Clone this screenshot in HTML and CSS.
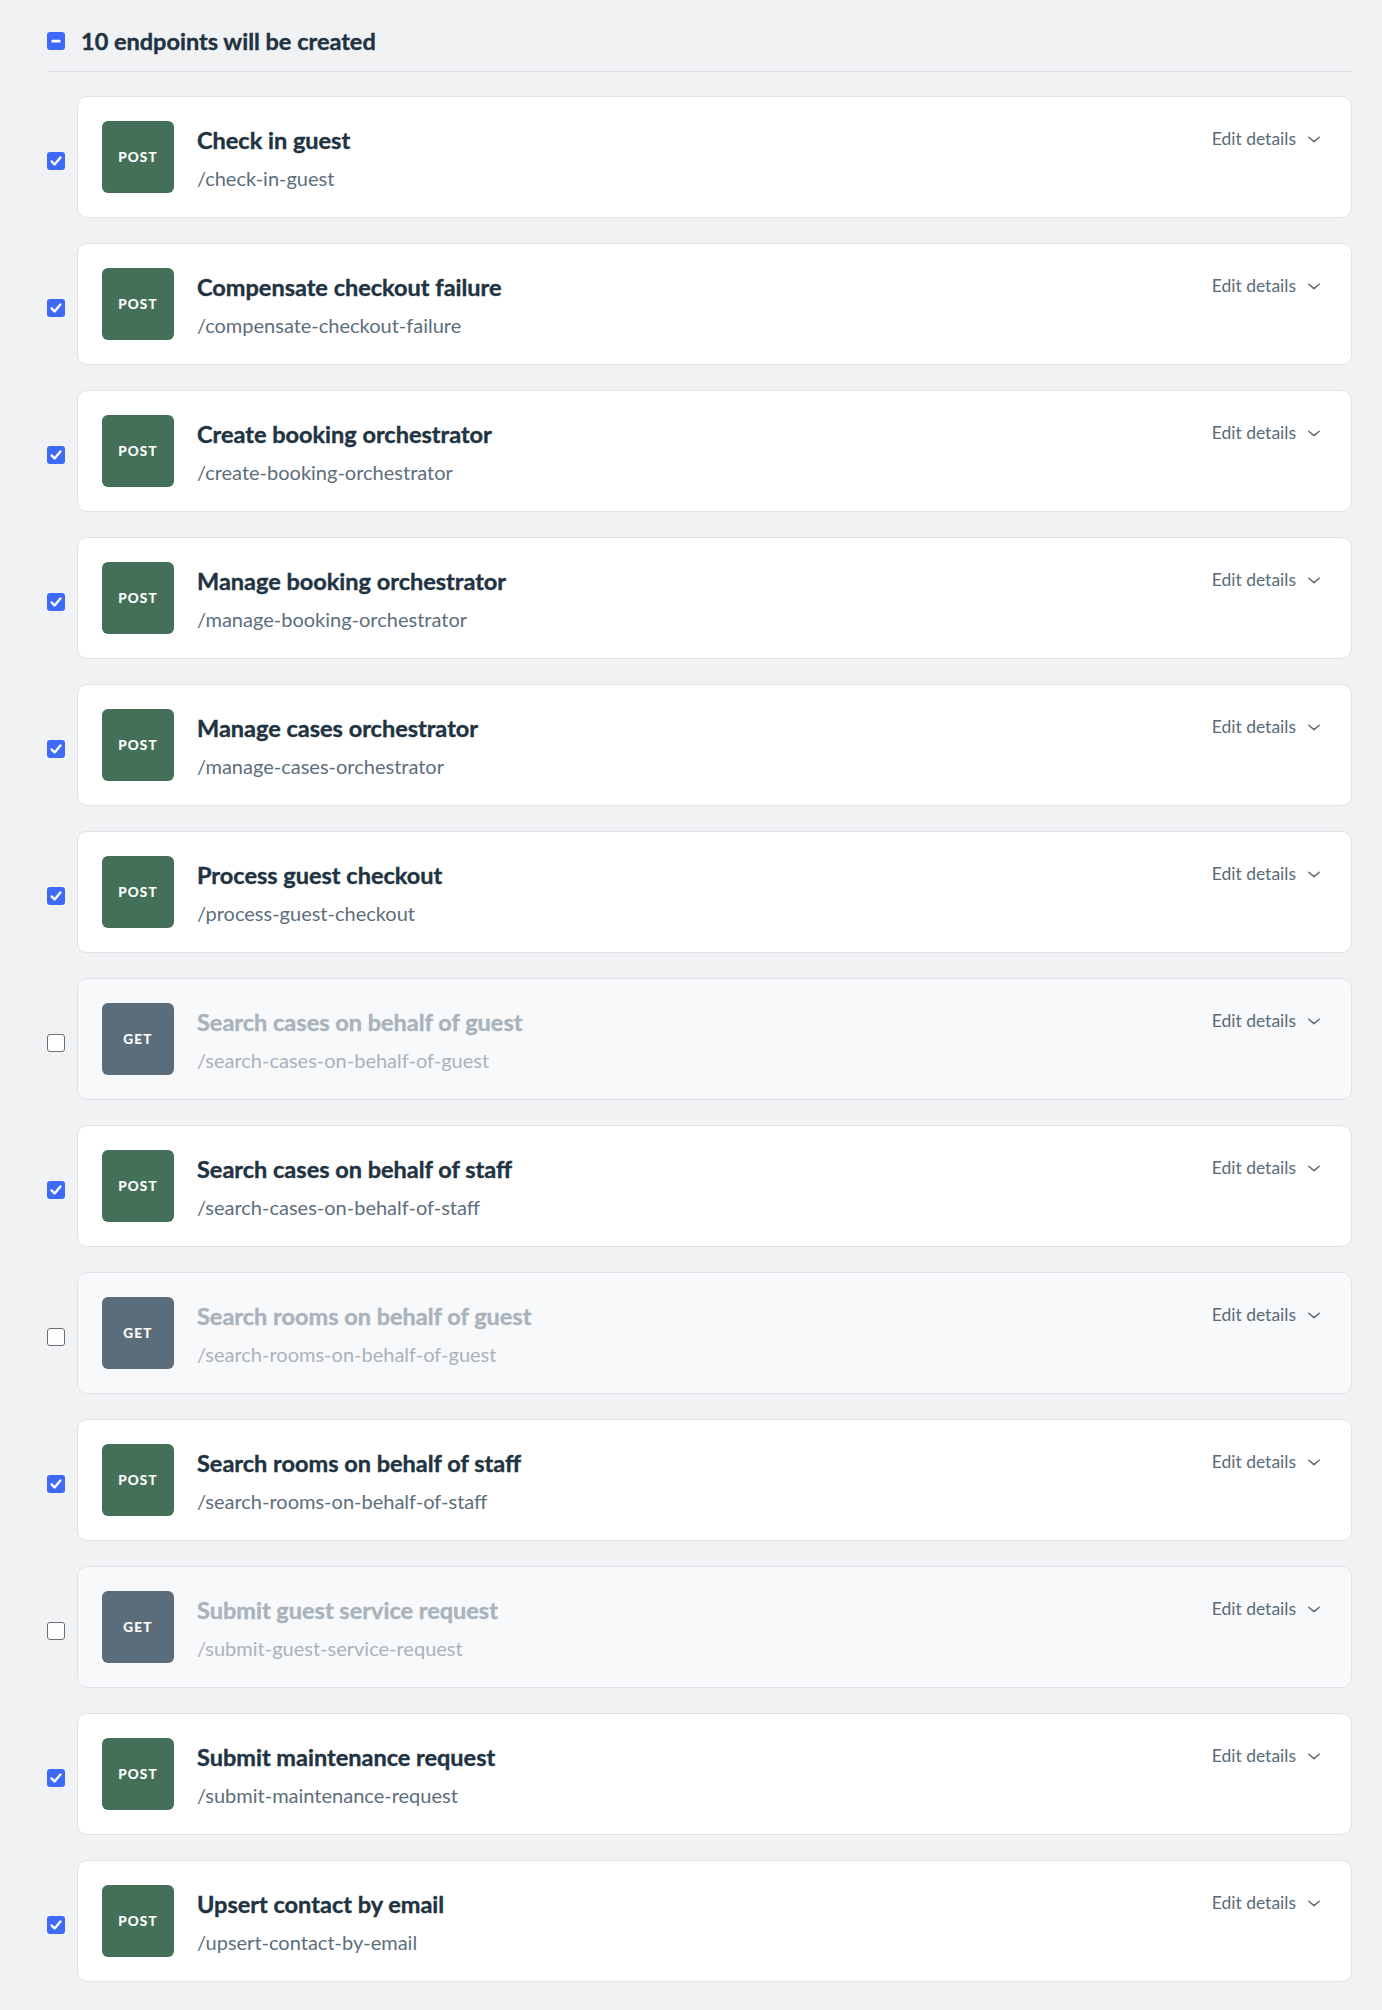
FILE: index.html
```html
<!DOCTYPE html>
<html lang="en">
<head>
    <meta charset="UTF-8">
    <title>Endpoints</title>
    <link rel="stylesheet" href="styles.css">
</head>
<body>
    <main class="endpoints">
        <div class="endpoints-head">
            <span class="box checked">
                <svg viewBox="0 0 18 18" width="18" height="18"><rect x="4.5" y="7.8" width="9" height="2.6" rx="1" fill="#fff"/></svg>
            </span>
            <h2>10 endpoints will be created</h2>
        </div>

        <ul class="endpoint-list" id="list"></ul>
    </main>

    <script>
        const endpoints = [
            ['POST', 'Check in guest', '/check-in-guest', true],
            ['POST', 'Compensate checkout failure', '/compensate-checkout-failure', true],
            ['POST', 'Create booking orchestrator', '/create-booking-orchestrator', true],
            ['POST', 'Manage booking orchestrator', '/manage-booking-orchestrator', true],
            ['POST', 'Manage cases orchestrator', '/manage-cases-orchestrator', true],
            ['POST', 'Process guest checkout', '/process-guest-checkout', true],
            ['GET', 'Search cases on behalf of guest', '/search-cases-on-behalf-of-guest', false],
            ['POST', 'Search cases on behalf of staff', '/search-cases-on-behalf-of-staff', true],
            ['GET', 'Search rooms on behalf of guest', '/search-rooms-on-behalf-of-guest', false],
            ['POST', 'Search rooms on behalf of staff', '/search-rooms-on-behalf-of-staff', true],
            ['GET', 'Submit guest service request', '/submit-guest-service-request', false],
            ['POST', 'Submit maintenance request', '/submit-maintenance-request', true],
            ['POST', 'Upsert contact by email', '/upsert-contact-by-email', true]
        ];

        const tick = '<svg viewBox="0 0 18 18" width="18" height="18"><path d="M4.6 9.4l3 3.1 5.8-7" fill="none" stroke="#fff" stroke-width="2.4" stroke-linecap="round" stroke-linejoin="round"/></svg>';
        const chevron = '<svg viewBox="0 0 16 16" width="16" height="16"><path d="M2 6l6 5 6-5" fill="none" stroke="currentColor" stroke-width="1.7" stroke-linecap="round" stroke-linejoin="round"/></svg>';

        document.getElementById('list').innerHTML = endpoints.map(([method, name, path, on]) => `
            <li class="endpoint-row">
                <span class="box ${on ? 'checked' : ''}">${on ? tick : ''}</span>
                <div class="endpoint-card ${on ? '' : 'off'}">
                    <span class="method ${method.toLowerCase()}">${method}</span>
                    <div class="endpoint-info">
                        <div class="endpoint-name">${name}</div>
                        <div class="endpoint-path">${path}</div>
                    </div>
                    <button class="edit-toggle">Edit details ${chevron}</button>
                </div>
            </li>`).join('');
    </script>
</body>
</html>
```

FILE: styles.css
```css
body {
    margin: 0;
    background: #f1f2f4;
    font-family: Lato, 'Open Sans', sans-serif;
    color: #1f3342;
}

.endpoints {
    padding: 28px 30px 20px 47px;
}

.endpoints-head {
    display: flex;
    align-items: center;
    gap: 16px;
    padding-bottom: 17px;
    border-bottom: 1px solid #dcdfe3;
}

.endpoints-head h2 {
    margin: 0;
    font-size: 23.5px;
    line-height: 26px;
    font-weight: 700;
    -webkit-text-stroke: 0.4px currentColor;
    color: #1f3342;
}

.box {
    flex: none;
    width: 18px;
    height: 18px;
    box-sizing: border-box;
    border: 1.5px solid #6b7076;
    border-radius: 3px;
    background: #fff;
    display: flex;
}

.box.checked {
    border: none;
    background: #3d6af7;
}

.endpoint-list {
    list-style: none;
    margin: 24px 0 0;
    padding: 0;
    display: flex;
    flex-direction: column;
    gap: 25px;
}

.endpoint-row {
    display: flex;
    align-items: center;
    gap: 12px;
}

.endpoint-row .box {
    margin-top: 8px;
}

.endpoint-card {
    flex: 1;
    display: flex;
    align-items: flex-start;
    gap: 23px;
    padding: 24px;
    background: #fff;
    border: 1px solid #dfe2e6;
    border-radius: 10px;
}

.endpoint-card.off {
    background: #f8f9fb;
}

.method {
    flex: none;
    width: 72px;
    height: 72px;
    border-radius: 6px;
    display: flex;
    align-items: center;
    justify-content: center;
    font-size: 13.5px;
    font-weight: 700;
    letter-spacing: 1.2px;
    -webkit-text-stroke: 0.2px currentColor;
    color: #fff;
}

.method.post {
    background: #446f59;
}

.method.get {
    background: #5b6c7a;
}

.endpoint-info {
    flex: 1;
    padding-top: 4px;
}

.endpoint-name {
    font-size: 23.5px;
    line-height: 30px;
    font-weight: 700;
    -webkit-text-stroke: 0.4px currentColor;
    color: #1f3342;
}

.endpoint-path {
    margin-top: 10px;
    font-size: 20px;
    line-height: 26px;
    color: #5c6e7c;
}

.off .endpoint-name,
.off .endpoint-path {
    color: #a9b3bb;
}

.edit-toggle {
    display: flex;
    align-items: center;
    gap: 11px;
    margin: 7px 6px 0 0;
    padding: 0;
    border: none;
    background: none;
    font-family: inherit;
    font-size: 17.5px;
    color: #5a6b78;
    cursor: pointer;
}

.edit-toggle svg {
    width: 14px;
    height: 14px;
}
```
